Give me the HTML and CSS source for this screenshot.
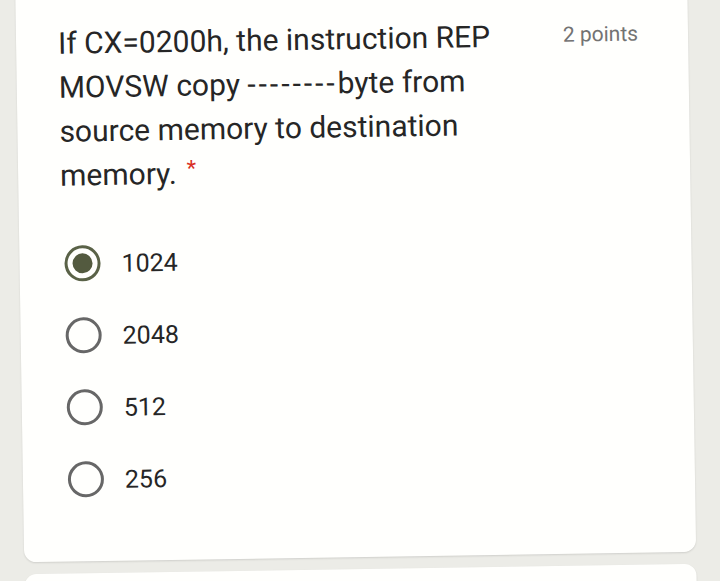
FILE: index.html
```html
<!DOCTYPE html>
<html>
<head>
<meta charset="utf-8">
<link rel="stylesheet" href="styles.css">
</head>
<body>
<div class="page">
  <div class="card">
    <div class="head">
      <div class="question">If CX=0200h, the instruction REP MOVSW copy <span class="dash">--------</span>byte from source memory to destination memory.<span class="req">*</span></div>
      <div class="points">2 points</div>
    </div>
    <div class="options">
      <div class="option"><span class="radio checked"><span class="dot"></span></span><span class="label">1024</span></div>
      <div class="option"><span class="radio"></span><span class="label">2048</span></div>
      <div class="option"><span class="radio"></span><span class="label">512</span></div>
      <div class="option"><span class="radio"></span><span class="label">256</span></div>
    </div>
  </div>
  <div class="card next"></div>
</div>
</body>
</html>
```
FILE: styles.css
```css
html, body {
  margin: 0;
  padding: 0;
  background: #ecece7;
  overflow: hidden;
}
.page {
  width: 720px;
  height: 581px;
  padding-top: 1px;
  box-sizing: border-box;
  transform: rotate(-0.9deg);
  transform-origin: 50% 50%;
}
.card {
  margin: -21px 28px 0 20px;
  background: #fffffd;
  border-radius: 12px;
  box-shadow: 0 1px 2px rgba(0,0,0,0.12);
  padding: 37px 50px 64px 42px;
  font-family: Roboto, "Liberation Sans", sans-serif;
}
.card.next {
  margin-top: 12px;
  height: 40px;
  padding: 0;
}
.head {
  display: flex;
  align-items: flex-start;
}
.question {
  width: 452px;
  font-size: 30px;
  line-height: 44px;
  color: #262626;
}
.dash {
  letter-spacing: 3px;
}
.req {
  color: #d93025;
  font-size: 22px;
  margin-left: 10px;
  vertical-align: 8px;
  line-height: 1;
}
.points {
  margin-left: auto;
  margin-top: 9px;
  font-size: 21px;
  color: #737373;
}
.options {
  margin-top: 48px;
  display: flex;
  flex-direction: column;
  gap: 36px;
}
.option {
  display: flex;
  align-items: center;
  height: 36px;
}
.radio {
  width: 30px;
  height: 30px;
  border: 3px solid #676767;
  border-radius: 50%;
  margin-left: 3px;
  display: flex;
  align-items: center;
  justify-content: center;
}
.radio.checked {
  border-color: #5a6247;
}
.dot {
  width: 20px;
  height: 20px;
  border-radius: 50%;
  background: #535a3f;
}
.label {
  margin-left: 21px;
  font-size: 25px;
  color: #262626;
}
```
